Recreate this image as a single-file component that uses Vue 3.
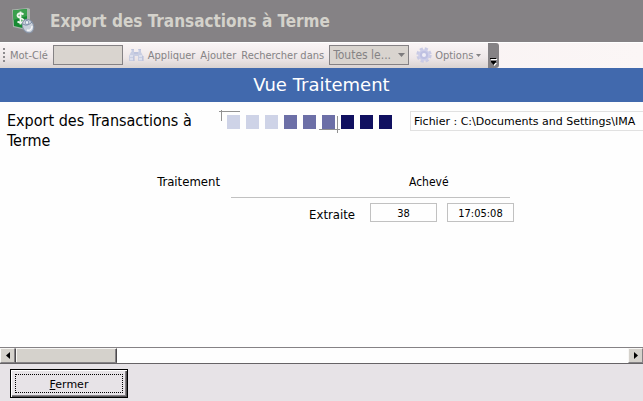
<script setup>
import { ref } from 'vue'

const keyword = ref('')
const scope = ref('Toutes le...')
const extracted = ref('38')
const finishedAt = ref('17:05:08')
const steps = ['light', 'light', 'light', 'mid', 'mid', 'mid', 'dark', 'dark', 'dark']
</script>

<template>
  <div class="page">
    <header class="title-bar">
      <svg class="app-icon" viewBox="0 0 26 28" width="26" height="28" aria-hidden="true">
        <path d="M2 2.500 18 1l2 1v20l-2 1.500L3 20z" fill="#a9b5ac" />
        <path d="M3 3.500 17 2v20L4 19z" fill="#168a32" />
        <path d="M3 3.500 17 2v7L3.500 13z" fill="#3aa04d" />
        <path d="M13.500 7.500C11 5.500 7.500 6 7.500 8.500c0 3 6 2 6 5 0 2.500-3.500 3-6 1M10.500 4.500v13" fill="none" stroke="#f1f7f0" stroke-width="1.800" />
        <ellipse cx="18" cy="19" rx="5.500" ry="7" transform="rotate(-22 18 19)" fill="#c9d0da" stroke="#8894a7" />
        <path d="M13 17c3 2 6 1 9-2M16 12.500l2 5.500" fill="none" stroke="#7889a3" />
        <ellipse cx="17" cy="15.500" rx="1.500" ry="2.200" fill="#f1f4f8" stroke="#6d819e" stroke-width=".7" />
        <path d="M17 23c3 1 5-1 5-4" fill="none" stroke="#f4f6f8" stroke-width="1.500" />
      </svg>
      <h1>Export des Transactions à Terme</h1>
    </header>

    <div class="toolbar-row">
      <form class="toolbar" @submit.prevent>
        <span class="grip" aria-hidden="true"><i></i><i></i><i></i><i></i></span>
        <label for="keyword">Mot-Clé</label>
        <input id="keyword" v-model="keyword" class="keyword" type="text" />
        <button class="tool apply" type="submit">
          <svg viewBox="0 0 16 14" width="16" height="14" aria-hidden="true">
            <path d="M3 1h3v3h4V1h3v3l2 4v5h-5V8H6v5H1V8l2-4z" fill="#c9cee2" />
            <path d="M3 3h3M10 3h3M2 8h3M11 8h3M2 11h3M11 11h3" stroke="#eef0f8" stroke-width="1" />
            <path d="M6 5h4M5 1v3M12 1v3M6 8v5M15 8v5" stroke="#b3bad8" stroke-width="1" />
          </svg>
          Appliquer
        </button>
        <button class="tool" type="button">Ajouter</button>
        <label for="scope">Rechercher dans</label>
        <span class="select-wrap">
          <select id="scope" v-model="scope">
            <option>Toutes le...</option>
          </select>
          <svg class="caret" viewBox="0 0 7 4" width="7" height="4" aria-hidden="true"><path d="M0 0h7L3.500 4z" fill="#7d7b7d" /></svg>
        </span>
        <button class="tool options" type="button">
          <svg viewBox="0 0 16 16" width="16" height="16" aria-hidden="true">
            <circle cx="8" cy="8" r="6.200" fill="none" stroke="#c9cae4" stroke-width="3" stroke-dasharray="3 1.870" />
            <circle cx="8" cy="8" r="5.800" fill="#cdcee9" />
            <circle cx="8" cy="8" r="4" fill="#bfc1e2" />
            <circle cx="8" cy="8" r="2" fill="#f0eef6" />
          </svg>
          Options
          <svg viewBox="0 0 5 3" width="5" height="3" aria-hidden="true"><path d="M0 0h5L2.500 3z" fill="#858385" /></svg>
        </button>
      </form>
      <button class="overflow" type="button" aria-label="Plus">
        <svg viewBox="0 0 7 8" width="7" height="8" aria-hidden="true">
          <path d="M1 1h6v1H1zM2 5h5L4.500 8z" fill="#fff" />
          <path d="M0 0h6v1H0zM1 3h5v1L3.500 7 1 4z" fill="#000" />
        </svg>
      </button>
    </div>

    <h2 class="banner">Vue Traitement</h2>

    <main class="content">
      <section class="summary">
        <h3>Export des Transactions à Terme</h3>
        <div class="progress">
          <span v-for="(shade, i) in steps" :key="i" class="step" :class="shade"></span>
          <span class="corner start"></span>
          <span class="corner end"></span>
        </div>
        <div class="file">Fichier : C:\Documents and Settings\IMA</div>
      </section>

      <section class="results">
        <div class="results-head">
          <span>Traitement</span>
          <div class="status">Achevé</div>
        </div>
        <div class="results-row">
          <label for="extracted">Extraite</label>
          <input id="extracted" :value="extracted" type="text" readonly />
          <input :value="finishedAt" type="text" aria-label="Achevé" readonly />
        </div>
      </section>
    </main>

    <div class="scrollbar">
      <button type="button" aria-label="Gauche">
        <svg viewBox="0 0 4 7" width="4" height="7" aria-hidden="true"><path d="M4 0v7L0 3.500z" /></svg>
      </button>
      <div class="thumb"></div>
      <div class="track"></div>
      <button type="button" aria-label="Droite">
        <svg viewBox="0 0 4 7" width="4" height="7" aria-hidden="true"><path d="M0 0v7l4-3.500z" /></svg>
      </button>
    </div>

    <footer class="footer">
      <button class="close" type="button"><span><u>F</u>ermer</span></button>
    </footer>
  </div>
</template>

<style>
body {
  background: #fff;
}
</style>

<style scoped>
* {
  box-sizing: border-box;
}

.page {
  display: flex;
  flex-direction: column;
  min-height: 100vh;
  overflow: hidden;
  font-family: "DejaVu Sans Condensed", "DejaVu Sans", sans-serif;
  font-size: 11px;
  color: #000;
  background: #fefefe;
}

h1,
h2,
h3 {
  margin: 0;
}

button,
input,
select {
  margin: 0;
  padding: 0;
  border: 0;
  border-radius: 0;
  font: inherit;
  color: inherit;
  background: none;
}

.title-bar {
  display: flex;
  align-items: center;
  gap: 14px;
  height: 42px;
  padding: 0 10px;
  background: #858285;
}

.title-bar h1 {
  font-size: 17px;
  font-weight: 700;
  line-height: 24px;
  white-space: nowrap;
  color: #d4d2cb;
}

.toolbar-row {
  display: flex;
  height: 26px;
  border-top: 1px solid #fff;
  background: linear-gradient(90deg, #f6eeef, #fbf6f6);
}

.toolbar {
  display: flex;
  align-items: center;
  gap: 5px;
  width: 488px;
  flex: none;
  padding-left: 3px;
  padding-bottom: 1px;
  white-space: nowrap;
  color: #858385;
  background: linear-gradient(#faf5f6, #eee7e8 60%, #d8d2d1);
}

.grip {
  display: grid;
  gap: 2px;
}

.grip i {
  width: 2px;
  height: 2px;
  background: #8d8a8d;
}

.keyword,
.select-wrap select {
  height: 20px;
  border: 1px solid #858285;
  background: #d9d4cf;
}

.keyword {
  width: 70px;
}

.tool {
  display: flex;
  align-items: center;
  gap: 4px;
}

.options {
  gap: 3px;
}

.select-wrap {
  display: grid;
  align-items: center;
}

.select-wrap > * {
  grid-area: 1 / 1;
}

.select-wrap select {
  width: 80px;
  padding: 0 14px 0 3px;
  font-size: 12px;
  appearance: none;
}

.caret {
  justify-self: end;
  margin-right: 4px;
  pointer-events: none;
}

.options {
  padding-left: 2px;
}

.overflow {
  display: flex;
  align-items: flex-end;
  justify-content: center;
  width: 11px;
  padding-bottom: 2px;
  border-radius: 0 3px 3px 0;
  background: #858285;
}

.banner {
  height: 34px;
  font-family: "DejaVu Sans", sans-serif;
  font-size: 18px;
  font-weight: 400;
  line-height: 34px;
  text-align: center;
  color: #fff;
  background: #4169ad;
}

.content {
  flex: 1;
  padding-top: 9px;
}

.summary {
  display: flex;
  align-items: flex-start;
  padding-left: 7px;
}

.summary h3 {
  flex: none;
  width: 220px;
  padding-right: 20px;
  font-size: 16px;
  font-weight: 400;
  line-height: 20px;
}

.progress {
  position: relative;
  display: flex;
  flex: none;
  gap: 6px;
  width: 183px;
  padding-top: 4px;
}

.step {
  width: 13px;
  height: 14px;
}

.light {
  background: #ced3e7;
}

.mid {
  background: #6c6fa7;
}

.dark {
  background: #101060;
}

.corner::before,
.corner::after {
  content: "";
  position: absolute;
  background: #929292;
}

.start::before {
  left: -8px;
  top: 0;
  width: 21px;
  height: 1px;
}

.start::after {
  left: -6px;
  top: -1px;
  width: 1px;
  height: 11px;
}

.end::before {
  left: 92px;
  top: 18px;
  width: 21px;
  height: 1px;
}

.end::after {
  left: 110px;
  top: 5px;
  width: 1px;
  height: 17px;
}

.file {
  flex: 1;
  min-width: 0;
  height: 20px;
  overflow: hidden;
  padding-left: 3px;
  border: 1px solid #e1e1e1;
  border-right: 0;
  font-family: "DejaVu Sans", sans-serif;
  line-height: 20px;
  white-space: nowrap;
}

.results {
  width: 514px;
  padding-top: 22px;
}

.results-head {
  display: flex;
  justify-content: flex-end;
  gap: 11px;
  padding-right: 4px;
  font-size: 13px;
  line-height: 18px;
}

.status {
  width: 279px;
  height: 25px;
  padding-left: 178px;
  border-bottom: 1px solid #c1c1c1;
  font-size: 12px;
}

.results-row {
  display: flex;
  align-items: center;
  justify-content: flex-end;
  gap: 10px;
  padding-top: 5px;
}

.results-row label {
  padding-top: 3px;
  padding-right: 5px;
  font-size: 13px;
}

.results-row input {
  width: 67px;
  height: 19px;
  padding-top: 2px;
  border: 1px solid #c1c1c1;
  text-align: center;
}

.scrollbar {
  display: flex;
  height: 17px;
  border-top: 1px solid #858285;
  border-bottom: 1px solid #666366;
  background: #fefefe;
}

.scrollbar button,
.thumb {
  flex: none;
  border: 1px solid;
  border-color: #f8f7f5 #858285 #858285 #f8f7f5;
  background: #d5d2cc;
}

.scrollbar button {
  display: grid;
  place-items: center;
  width: 15px;
}

.thumb {
  width: 102px;
  border-right-color: #4c4a4c;
  border-left-color: #4c4a4c;
  box-shadow: inset 1px 0 #f8f7f5, inset -1px 0 #858285;
}

.track {
  flex: 1;
}

.footer {
  height: 37px;
  padding: 5px 10px;
  background: #e7e3e7;
}

.close {
  display: block;
  width: 118px;
  height: 29px;
  padding: 3px;
  border: 1px solid #000;
  font-family: "DejaVu Sans", sans-serif;
  background: #e7e3e7;
  box-shadow: inset 1px 1px #fff, inset -1px -1px #555255, inset -2px -2px #858285;
}

.close span {
  display: block;
  height: 19px;
  margin: 1px;
  border: 1px dotted #000;
  line-height: 19px;
}
</style>
